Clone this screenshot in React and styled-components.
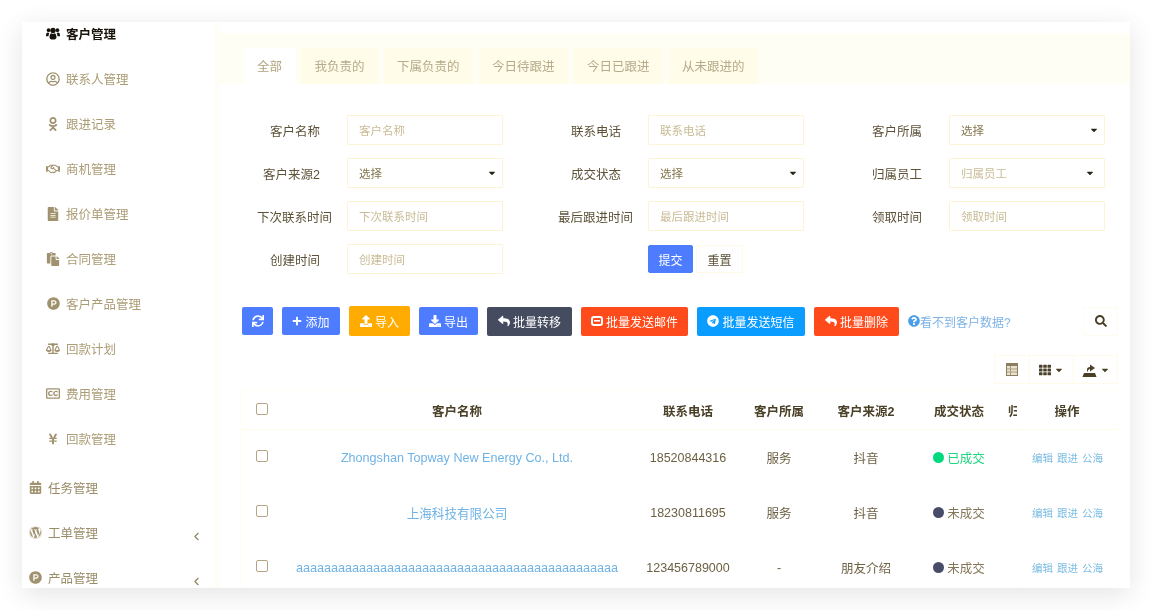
import React from "react";
import styled, { createGlobalStyle } from "styled-components";
import {
  FaRegUserCircle, FaOdnoklassniki, FaRegHandshake, FaFileAlt, FaPaste, FaProductHunt,
  FaBalanceScale, FaRegClosedCaptioning, FaYenSign, FaCalendarAlt, FaWordpress,
  FaSync, FaPlus, FaUpload, FaDownload, FaReply, FaTelegram, FaQuestionCircle, FaSearch, FaTh, FaCaretDown,
} from "react-icons/fa";
import { FiChevronLeft } from "react-icons/fi";

const Global = createGlobalStyle`
  html, body { margin: 0; padding: 0; background: #fff; height: 100%; overflow: hidden; }
  body { font-family: "Liberation Sans", "Noto Sans CJK SC", sans-serif; font-size: 12.5px; color: #5d5238; }
  * { box-sizing: border-box; }
`;

const Page = styled.div`
  width: 1152px; height: 610px; padding: 22px;
`;
const Card = styled.div`
  width: 1108px; height: 566px; background: #fff; display: flex; overflow: hidden;
  box-shadow: 0 6px 26px rgba(0, 0, 0, 0.11);
  filter: blur(0.35px);
`;
const Sidebar = styled.nav`
  width: 193px; flex: none; display: flex; flex-direction: column; margin-top: -11px;
`;
const SideItem = styled.div`
  height: 45px; flex: none; display: flex; align-items: center; gap: 6px;
  padding-left: ${p => (p.$top ? "7px" : "24px")};
  color: ${p => (p.$active ? "#17130a" : p.$top ? "#998c68" : "#ab9c75")};
  font-weight: ${p => (p.$active ? 700 : 400)};
  font-size: 12.5px;
`;
const SideIcon = styled.span`
  width: ${p => (p.$top ? "13px" : "14px")}; flex: none; display: flex; justify-content: center;
  font-size: ${p => p.$size}px; color: ${p => (p.$active ? "#17130a" : "#a0926e")};
`;
const Chevron = styled.span`
  margin-left: auto; margin-right: 12px; display: flex; font-size: 13px; padding-top: 8px; color: #8f8258;
`;
const Gap = styled.div` height: 4px; flex: none; `;
const Main = styled.main`
  flex: 1; min-width: 0; border-left: 5px solid #fffef6; display: flex; flex-direction: column;
`;
const TabBar = styled.div`
  flex: none; margin-top: 11px; height: 51px; background: #fffef5; display: flex; align-items: flex-end; gap: 5.5px; padding: 0 0 0 23.5px;
`;
const Tab = styled.div`
  height: 36px; display: flex; align-items: center; padding: 0 13.5px 2px;
  font-size: 12.5px; background: ${p => (p.$active ? "#fff" : "#fffcea")};
  color: ${p => (p.$active ? "#b0a27c" : "#b6aa8a")};
`;
const Form = styled.div`
  flex: none; display: grid; grid-template-columns: repeat(3, 301px); row-gap: 13px; padding: 31px 0 0 20px;
`;
const Field = styled.div` display: flex; align-items: center; height: 30px; `;
const Label = styled.label`
  width: ${p => (p.$long ? "92px" : "80px")}; flex: none; text-align: right; white-space: nowrap;
  margin-right: ${p => (p.$long ? "15px" : "27px")}; color: #5d5238; font-size: 12.5px; padding-top: 1px;
`;
const InputBox = styled.div`
  width: 156px; height: 30px; border: 1px solid #fff3d6; display: flex; align-items: center;
  justify-content: space-between; padding: 0 ${p => (p.$ph ? "9px" : "5px")} 0 11px; font-size: 11.5px;
  color: ${p => (p.$ph ? "#c9bb95" : "#84774f")};
  border-radius: 1px;
`;
const Caret = styled.span` display: flex; color: #2a2416; font-size: 10px; `;
const Actions = styled.div` display: flex; gap: 3px; align-items: center; margin-left: 107px; `;
const FormBtn = styled.button`
  height: 28px; width: ${p => p.$w}px; border-radius: 2px; font: inherit; font-size: 12px; padding: 0;
  border: 1px solid ${p => (p.$primary ? "#4d7cfe" : "#fff9e8")};
  background: ${p => (p.$primary ? "#4d7cfe" : "#fff")}; color: ${p => (p.$primary ? "#fff" : "#5d5238")};
`;
const Toolbar = styled.div`
  flex: none; display: flex; align-items: center; gap: 9px; padding: 0 12px 0 22px; margin-top: 32px; height: 30px;
`;
const TBtn = styled.button`
  height: ${p => p.$h || 28}px; width: ${p => p.$w}px; flex: none; border: 0; border-radius: 2px; background: ${p => p.$bg}; color: #fff;
  font: inherit; font-size: 12px; padding: 0; display: flex; align-items: center; justify-content: center; gap: 3px;
`;
const Help = styled.a`
  display: flex; align-items: center; color: #7fb3e6; font-size: 12px; white-space: nowrap;
  svg { color: #4a9fe8; font-size: 12px; }
`;
const SearchBtn = styled.button`
  margin-left: auto; width: 35px; height: 29px; border: 1px solid #fffbee; background: #fff; color: #4a4028;
  font-size: 12px; display: flex; align-items: center; justify-content: center; padding: 0; border-radius: 2px;
`;
const ViewRow = styled.div` flex: none; display: flex; justify-content: flex-end; padding: 19px 12px 0 0; `;
const ViewBtn = styled.button`
  width: ${p => p.$w}px; height: 29px; border: 1px solid #fffbe8; margin-left: -1px; background: #fff; color: #4a4028;
  display: flex; align-items: center; justify-content: center; gap: 3px; padding: 0; font-size: 12px;
`;
const Table = styled.div`
  flex: none; margin: 6px 12px 0 20px; border-top: 1px solid #fffef0; border-left: 1px solid #fffef0; border-right: 1px solid #fffef3;
  display: flex; flex-direction: column;
`;
const TableRow = styled.div`
  flex: none; height: ${p => (p.$head ? "39px" : "55px")};
  display: grid; grid-template-columns: 43px 346px 116px 66px 108px 78px 19px 100px;
  align-items: center; text-align: center;
  border-bottom: ${p => (p.$head ? "1px solid #fffdea" : "0")};
  font-weight: ${p => (p.$head ? 700 : 400)}; font-size: 12.5px;
  color: ${p => (p.$head ? "#4a4028" : "#6d6144")};
`;
const Cell = styled.div` white-space: nowrap; `;
const Clip = styled.div` overflow: hidden; white-space: nowrap; text-align: left; padding-left: 10px; `;
const Check = styled.span`
  display: block; width: 12px; height: 12px; margin: -3px 0 0 15px; border: 1px solid #b5a584; border-radius: 2px; background: #fff;
`;
const NameLink = styled.a` color: #6fb3e4; font-size: 12.6px; white-space: nowrap; `;
const Status = styled.span`
  display: inline-flex; align-items: center; gap: 3px; color: ${p => (p.$on ? "#1fd67f" : "#84775a")};
  &::before { content: ""; width: 11px; height: 11px; border-radius: 50%; background: ${p => (p.$on ? "#00d97e" : "#474c68")}; }
`;
const Ops = styled.div` display: flex; justify-content: center; gap: 4px; font-size: 10.5px; color: #7cbde2; height: 100%; align-items: center; border-left: 1px solid #fffef3; `;

const Team = () => (
  <svg width="15" height="13" viewBox="0 0 15 13" fill="currentColor" aria-hidden="true">
    <circle cx="2.8" cy="3" r="2" />
    <circle cx="12.2" cy="3" r="2" />
    <circle cx="7.5" cy="3.2" r="2.8" />
    <path d="M0 9c0-2.5.7-3.6 2-3.6.7 0 1.2.3 1.6.7-.6.8-.9 1.9-.9 3.4H0zM15 9c0-2.5-.7-3.6-2-3.6-.7 0-1.2.3-1.6.7.6.8.9 1.9.9 3.4H15z" />
    <path d="M3.8 10.5c0-3 1.2-4.3 2-4.3.5.4 1 .6 1.7.6s1.200-.2 1.700-.6c.8 0 2 1.300 2 4.300 0 1.500-1 2.300-2.200 2.300H6c-1.200 0-2.200-.8-2.200-2.300z" />
  </svg>
);

const menu = [
  [Team, "客户管理", 15, true],
  [FaRegUserCircle, "联系人管理", 14],
  [FaOdnoklassniki, "跟进记录", 14],
  [FaRegHandshake, "商机管理", 16],
  [FaFileAlt, "报价单管理", 14],
  [FaPaste, "合同管理", 14],
  [FaProductHunt, "客户产品管理", 13],
  [FaBalanceScale, "回款计划", 15],
  [FaRegClosedCaptioning, "费用管理", 15],
  [FaYenSign, "回款管理", 12],
];
const topMenu = [
  [FaCalendarAlt, "任务管理", false],
  [FaWordpress, "工单管理", true],
  [FaProductHunt, "产品管理", true],
];
const tabs = ["全部", "我负责的", "下属负责的", "今日待跟进", "今日已跟进", "从未跟进的"];
const rows = [
  ["Zhongshan Topway New Energy Co., Ltd.", "18520844316", "服务", "抖音", true],
  ["上海科技有限公司", "18230811695", "服务", "抖音", false],
  ["a".repeat(46), "123456789000", "-", "朋友介绍", false],
];

const Mail = () => (
  <svg width="12" height="10" viewBox="0 0 12 10" aria-hidden="true">
    <rect x="1" y="1" width="10" height="8" rx="2" fill="none" stroke="#fff" strokeWidth="2" />
    <rect x="3" y="4" width="6" height="1.6" fill="#fff" />
  </svg>
);
const TableIcon = () => (
  <svg width="12" height="13" viewBox="0 0 12 13" aria-hidden="true">
    <rect x="0.5" y="0.5" width="11" height="12" fill="#e9e3d0" stroke="#8a7e60" />
    <rect x="1" y="1" width="10" height="2" fill="#8a7e60" />
    <path d="M4.5 3v9M1 6h10M1 9h10" stroke="#a89c7e" fill="none" />
  </svg>
);
const ExportIcon = () => (
  <svg width="15" height="14" viewBox="0 0 15 14" aria-hidden="true">
    <path d="M2 10h11l1.500 4H.5z" fill="#4a4028" />
    <path d="M5 9.500V6.500C5 5 6 4 8 4V1.500L13 5 8 8.500V6C6.700 6 6 7.500 5 9.500z" fill="#4a4028" />
  </svg>
);

function Input({ label, ph, value, caret, long }) {
  return (
    <Field>
      <Label $long={long}>{label}</Label>
      <InputBox $ph={!!ph}>
        <span>{ph || value}</span>
        {caret && <Caret><FaCaretDown /></Caret>}
      </InputBox>
    </Field>
  );
}

export default function App() {
  return (
    <Page>
      <Global />
      <Card>
        <Sidebar>
          {menu.map(([I, t, s, a]) => (
            <SideItem key={t} $active={a}>
              <SideIcon $active={a} $size={s}><I /></SideIcon>
              {t}
            </SideItem>
          ))}
          <Gap />
          {topMenu.map(([I, t, c]) => (
            <SideItem key={t} $top>
              <SideIcon $top $size={13}><I /></SideIcon>
              {t}
              {c && <Chevron><FiChevronLeft /></Chevron>}
            </SideItem>
          ))}
        </Sidebar>
        <Main>
          <TabBar>
            {tabs.map((t, i) => <Tab key={t} $active={i === 0}>{t}</Tab>)}
          </TabBar>
          <Form>
            <Input label="客户名称" ph="客户名称" />
            <Input label="联系电话" ph="联系电话" />
            <Input label="客户所属" value="选择" caret />
            <Input label="客户来源2" value="选择" caret />
            <Input label="成交状态" value="选择" caret />
            <Input label="归属员工" ph="归属员工" caret />
            <Input label="下次联系时间" ph="下次联系时间" long />
            <Input label="最后跟进时间" ph="最后跟进时间" long />
            <Input label="领取时间" ph="领取时间" />
            <Input label="创建时间" ph="创建时间" />
            <Actions>
              <FormBtn $primary $w={45}>提交</FormBtn>
              <FormBtn $w={47}>重置</FormBtn>
            </Actions>
          </Form>
          <Toolbar>
            <TBtn $w={31} $bg="#4d7cfe"><FaSync size={12} /></TBtn>
            <TBtn $w={58} $bg="#4d7cfe"><FaPlus size={10} />添加</TBtn>
            <TBtn $w={61} $h={30} $bg="#ffab00"><FaUpload size={12} />导入</TBtn>
            <TBtn $w={59} $bg="#4d7cfe"><FaDownload size={12} />导出</TBtn>
            <TBtn $w={85} $h={29} $bg="#454c60"><FaReply size={12} />批量转移</TBtn>
            <TBtn $w={107} $h={29} $bg="#ff4b1c"><Mail />批量发送邮件</TBtn>
            <TBtn $w={108} $h={29} $bg="#0b9cff"><FaTelegram size={12} />批量发送短信</TBtn>
            <TBtn $w={85} $h={29} $bg="#ff4b1c"><FaReply size={12} />批量删除</TBtn>
            <Help><FaQuestionCircle />看不到客户数据?</Help>
            <SearchBtn><FaSearch /></SearchBtn>
          </Toolbar>
          <ViewRow>
            <ViewBtn $w={36}><TableIcon /></ViewBtn>
            <ViewBtn $w={45}><FaTh /><FaCaretDown size={10} /></ViewBtn>
            <ViewBtn $w={45}><ExportIcon /><FaCaretDown size={10} /></ViewBtn>
          </ViewRow>
          <Table>
            <TableRow $head>
              <Check />
              <Cell>客户名称</Cell>
              <Cell>联系电话</Cell>
              <Cell>客户所属</Cell>
              <Cell>客户来源2</Cell>
              <Cell>成交状态</Cell>
              <Clip>归属员工</Clip>
              <Cell>操作</Cell>
            </TableRow>
            {rows.map(r => (
              <TableRow key={r[1]}>
                <Check />
                <Cell><NameLink>{r[0]}</NameLink></Cell>
                <Cell>{r[1]}</Cell>
                <Cell>{r[2]}</Cell>
                <Cell>{r[3]}</Cell>
                <Cell><Status $on={r[4]}>{r[4] ? "已成交" : "未成交"}</Status></Cell>
                <Cell />
                <Ops><span>编辑</span><span>跟进</span><span>公海</span></Ops>
              </TableRow>
            ))}
          </Table>
        </Main>
      </Card>
    </Page>
  );
}
